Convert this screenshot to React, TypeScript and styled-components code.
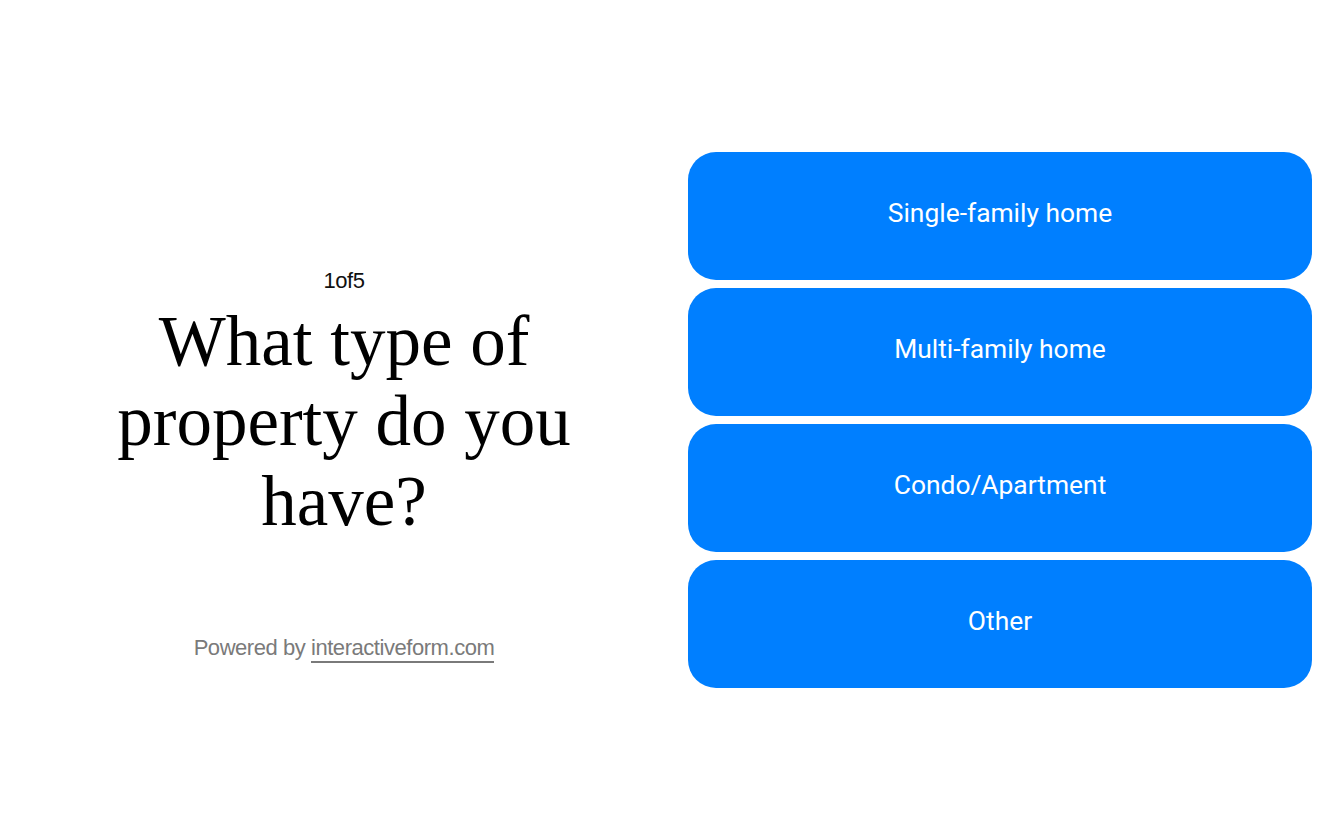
import React from "react";
import styled, { createGlobalStyle } from "styled-components";

const Global = createGlobalStyle`
  html, body { margin: 0; padding: 0; background: #ffffff; }
  * { box-sizing: border-box; }
`;

const Page = styled.div`
  width: 1344px;
  height: 840px;
  display: grid;
  grid-template-columns: 624px 624px;
  column-gap: 32px;
  padding: 0 32px;
  align-items: center;
`;

const Left = styled.div`
  display: flex;
  flex-direction: column;
  align-items: center;
  text-align: center;
  padding-top: 89px;
`;

const Counter = styled.div`
  font-family: "Liberation Sans", Arial, sans-serif;
  font-size: 22px;
  letter-spacing: -0.4px;
  color: #111;
  line-height: 24px;
`;

const Heading = styled.h1`
  margin: 8px 0 0;
  font-family: "Liberation Serif", "Times New Roman", serif;
  font-weight: 400;
  font-size: 71px;
  line-height: 80px;
  color: #000;
  width: 480px;
`;

const Powered = styled.div`
  margin-top: 95px;
  font-family: "Liberation Sans", Arial, sans-serif;
  font-size: 22px;
  line-height: 24px;
  letter-spacing: -0.45px;
  color: #7a7a7a;
`;

const Link = styled.a`
  color: #7a7a7a;
  text-decoration: none;
  border-bottom: 2px solid #7a7a7a;
  padding-bottom: 1px;
`;

const Options = styled.div`
  display: flex;
  flex-direction: column;
  gap: 8px;
`;

const Option = styled.button`
  height: 128px;
  padding: 0 0 6px;
  border: none;
  border-radius: 28px;
  background: #007fff;
  color: #ffffff;
  font-family: Roboto, "Liberation Sans", sans-serif;
  font-weight: 400;
  font-size: 26.4px;
  cursor: pointer;
`;

const options = ["Single-family home", "Multi-family home", "Condo/Apartment", "Other"];

export default function App() {
  return (
    <>
      <Global />
      <Page>
        <Left>
          <Counter>1of5</Counter>
          <Heading>What type of property do you have?</Heading>
          <Powered>
            Powered by <Link href="#">interactiveform.com</Link>
          </Powered>
        </Left>
        <Options>
          {options.map((o) => (
            <Option key={o}>{o}</Option>
          ))}
        </Options>
      </Page>
    </>
  );
}
